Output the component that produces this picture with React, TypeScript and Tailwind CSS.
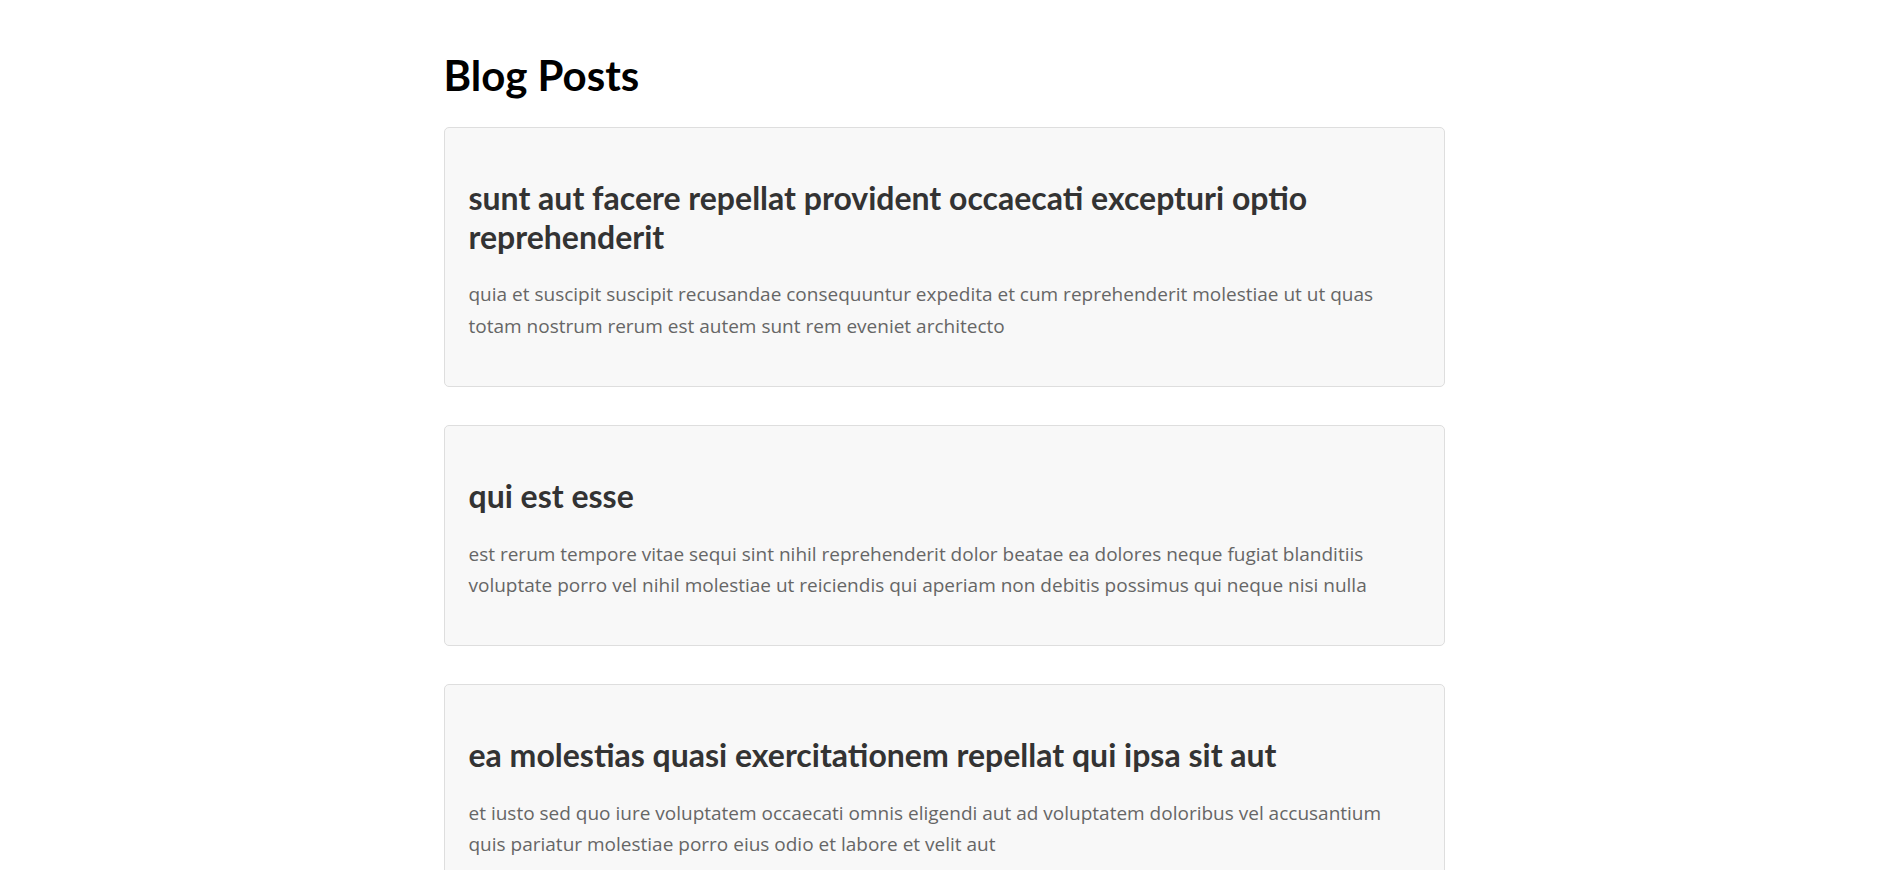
const posts = [
  {
    id: 1,
    title: 'sunt aut facere repellat provident occaecati excepturi optio reprehenderit',
    body: 'quia et suscipit suscipit recusandae consequuntur expedita et cum reprehenderit molestiae ut ut quas totam nostrum rerum est autem sunt rem eveniet architecto',
  },
  {
    id: 2,
    title: 'qui est esse',
    body: 'est rerum tempore vitae sequi sint nihil reprehenderit dolor beatae ea dolores neque fugiat blanditiis voluptate porro vel nihil molestiae ut reiciendis qui aperiam non debitis possimus qui neque nisi nulla',
  },
  {
    id: 3,
    title: 'ea molestias quasi exercitationem repellat qui ipsa sit aut',
    body: 'et iusto sed quo iure voluptatem occaecati omnis eligendi aut ad voluptatem doloribus vel accusantium quis pariatur molestiae porro eius odio et labore et velit aut',
  },
]

const App = () => {
  return (
    <main className="w-[1001px] mx-auto pt-[51px] pb-10 font-['Lato','Liberation_Sans',sans-serif]">
      <h1 className="text-[42px] leading-[48px] font-bold text-black">Blog Posts</h1>
      <section className="mt-[28px] flex flex-col gap-[38px]">
        {posts.map(post => (
          <article key={post.id} className="bg-[#f8f8f8] border border-[#dedede] rounded-[5px] pl-6 pr-10 pt-[51px] pb-[44px]">
            <h2 className="text-[32px] leading-[38.7px] font-bold text-[#333]">{post.title}</h2>
            <p className="mt-[23px] font-['Open_Sans','Liberation_Sans',sans-serif] text-[19px] leading-[31.3px] text-[#666]">{post.body}</p>
          </article>
        ))}
      </section>
    </main>
  )
}

export default App
